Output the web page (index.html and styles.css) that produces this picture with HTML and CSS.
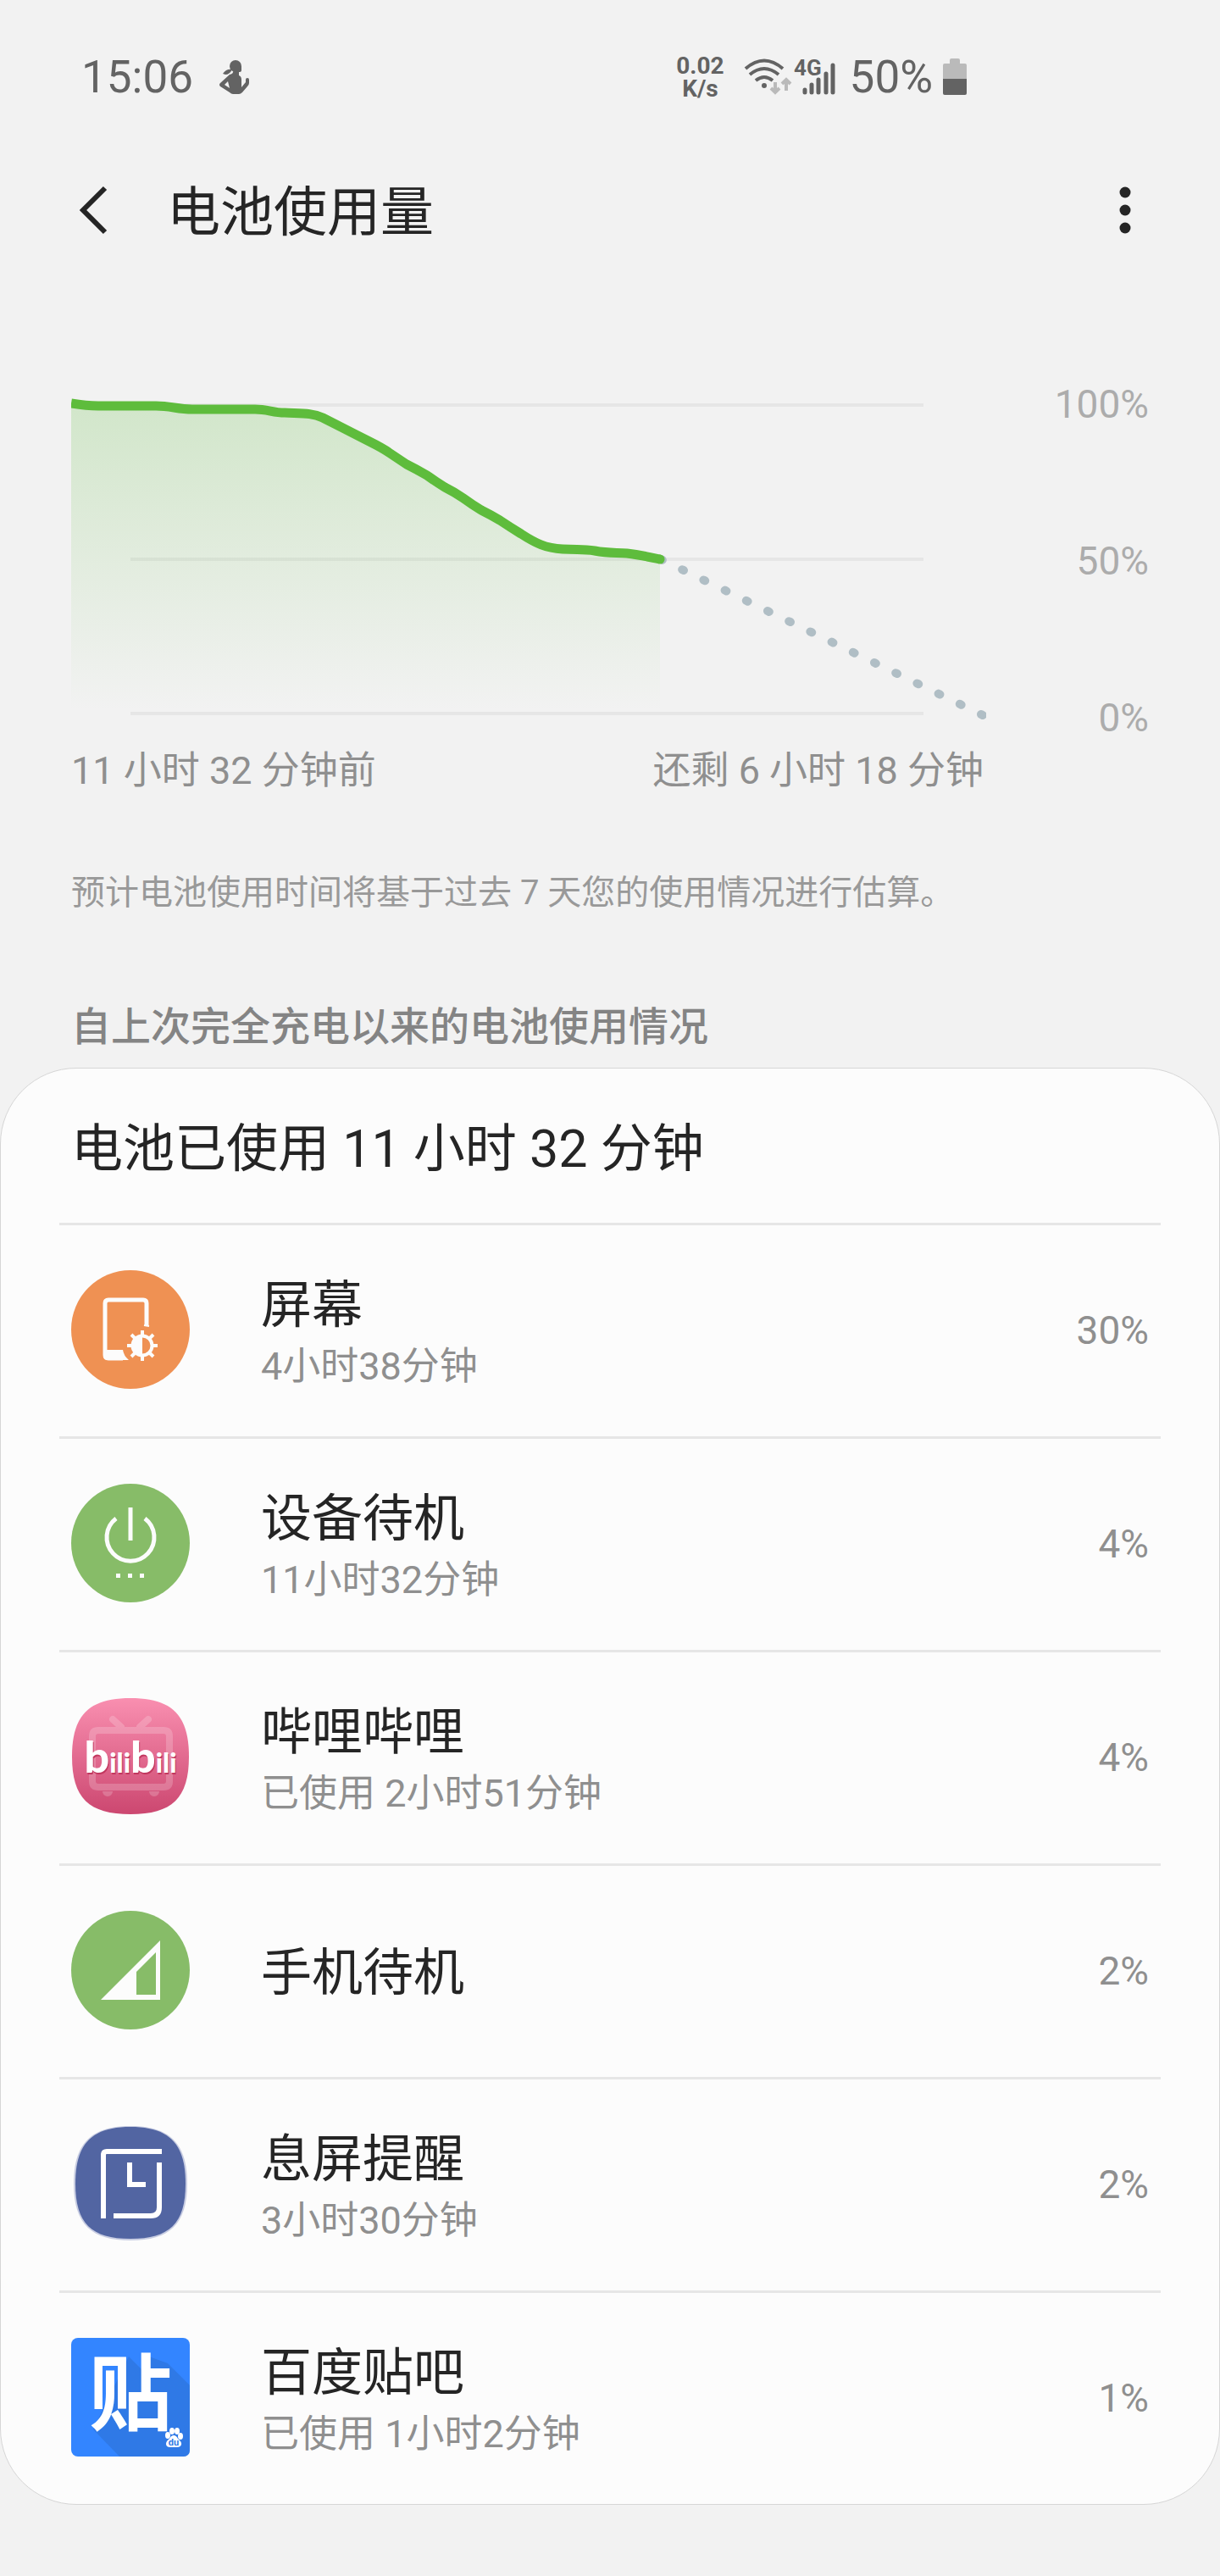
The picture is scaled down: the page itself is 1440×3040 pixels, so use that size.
FILE: index.html
```
<!DOCTYPE html>
<html lang="zh-CN">
<head>
  <meta charset="UTF-8" />
  <meta name="viewport" content="width=device-width, initial-scale=1.0"/>
  <title>电池使用量</title>
  <link rel="stylesheet" href="styles.css">
</head>
<body>
  <div class="status-bar">
    <span class="time">15:06</span>
    <svg class="runner" width="36" height="40" viewBox="0 0 36 40" fill="#636363">
      <circle cx="19" cy="7" r="7"/>
      <path d="M19 7h7v5q0 2-3 2v4q3 1 3 5v9l5-6v-3q0-2 2-2t2 2v4q0 2-2 4l-6 7q-2 2-4 2h-7q-2 0-4-2L1 31q-2-2 0-4l11-10q4-1 4-3z"/>
      <path d="M4 16q4-6 11-5-3 6-8 6z"/>
      <path d="M6 29l4-4 2 8z" fill="#f2f2f2"/>
    </svg>
    <div class="status-right">
      <div class="speed">0.02<br>K/s</div>
      <svg class="wifi" width="56" height="44" viewBox="0 0 56 44">
        <g fill="none" stroke="#636363" stroke-width="4">
          <path d="M2 12q22-19 44 0"/>
          <path d="M7 19q17-14 34 0"/>
          <path d="M14 26q10-8 20 0"/>
        </g>
        <circle cx="24" cy="32" r="3" fill="#636363"/>
        <g fill="none" stroke="#bababa" stroke-width="4">
          <path d="M37 28v12M32 35l5 5 5-5"/>
          <path d="M50 38v-12M45 30l5-5 5 5"/>
        </g>
      </svg>
      <svg class="signal" width="50" height="44" viewBox="0 0 50 44">
        <text x="0" y="20">4G</text>
        <g stroke="#636363" stroke-width="5" stroke-linecap="round">
          <path d="M13 37v3M21 31v9M29 25v15M38 18v22M46 8v32"/>
        </g>
      </svg>
      <span class="level">50%</span>
      <svg width="28" height="44" viewBox="0 0 28 44">
        <path d="M8 2q0-2 2-2h8q2 0 2 2v4h6q2 0 2 2v16H0V8q0-2 2-2h6z" fill="#bababa"/>
        <path d="M0 24h28v17q0 2-2 2H2q-2 0-2-2z" fill="#636363"/>
      </svg>
    </div>
  </div>

  <header class="header">
    <button class="back-btn" aria-label="返回">
      <svg width="36" height="60" viewBox="0 0 36 60"><path d="M36 4L10 30l26 26" fill="none" stroke="#252525" stroke-width="6"/></svg>
    </button>
    <h1>电池使用量</h1>
    <button class="menu-btn" aria-label="更多选项">
      <svg width="14" height="60" viewBox="0 0 14 60" fill="#252525"><circle cx="7" cy="9" r="6.5"/><circle cx="7" cy="30" r="6.5"/><circle cx="7" cy="51" r="6.5"/></svg>
    </button>
  </header>

  <section class="chart">
    <div class="plot">
      <svg viewBox="0 0 1080 424">
        <defs>
          <linearGradient id="area" x1="0" y1="0" x2="0" y2="1">
            <stop offset="0" stop-color="#5ebc3c" stop-opacity="0.22"/>
            <stop offset="1" stop-color="#5ebc3c" stop-opacity="0"/>
          </linearGradient>
        </defs>
        <path d="M70 28h936M70 210h936M70 392h936" stroke="#e6e6e6" stroke-width="4"/>
        <path d="M0 26L30 29H100L141 33H217L252 37Q280 37 297 43L368 81L396 99L417 110L440 126L460 137L481 152L504 164L531 181Q555 196 573 197L605 198L653 203L695 210V388H0z" fill="url(#area)"/>
        <path d="M696 210L1076 394" fill="none" stroke="#b0bec5" stroke-width="10" stroke-linecap="round" stroke-dasharray="2 26"/>
        <path d="M0 26C12 28 20 29 32 29H100C118 29 125 33 143 33H217C232 33 238 37 252 37C272 38 284 37 297 43L352 71Q368 79 375 84Q387 92 396 98Q408 104 420 111Q431 119 441 125Q453 131 463 138Q474 146 484 152Q496 158 506 164Q518 172 531 180C548 191 560 197 580 198C600 199 604 198 618 200C634 203 642 202 656 203Q672 205 695 210" fill="none" stroke="#5ebc3c" stroke-width="11"/>
        <circle cx="695" cy="210" r="5.5" fill="#5ebc3c"/>
      </svg>
      <div class="x-labels">
        <span>11 小时 32 分钟前</span>
        <span>还剩 6 小时 18 分钟</span>
      </div>
    </div>
    <div class="y-labels">
      <span>100%</span>
      <span>50%</span>
      <span>0%</span>
    </div>
  </section>

  <p class="note">预计电池使用时间将基于过去 7 天您的使用情况进行估算。</p>
  <h2>自上次完全充电以来的电池使用情况</h2>

  <main class="card">
    <h3>电池已使用 11 小时 32 分钟</h3>
    <ul>
      <li><a class="row" href="#screen">
        <svg class="icon" viewBox="0 0 140 140">
          <circle cx="70" cy="70" r="70" fill="#ef9153"/>
          <path d="M89 66V39q0-4-4-4H44q-4 0-4 4v61q0 4 4 4h17" fill="none" stroke="#fcfcfc" stroke-width="5"/>
          <path d="M40 94h21q1 7 7 12H43q-4 0-4-4z" fill="#fcfcfc"/>
          <path d="M86 65l6 1" stroke="#fcfcfc" stroke-width="2"/>
          <circle cx="84" cy="89" r="11.5" fill="none" stroke="#fcfcfc" stroke-width="4"/>
          <path d="M84 77a12 12 0 0 0 0 24z" fill="#fcfcfc"/>
          <path d="M84 71v7M84 100v7M66 89h7M95 89h7M71 76l5 5M92 97l5 5M97 76l-5 5M76 97l-5 5" stroke="#fcfcfc" stroke-width="4"/>
        </svg>
        <div class="info"><b>屏幕</b><span>4小时38分钟</span></div>
        <span class="percent">30%</span>
      </a></li>
      <li><a class="row" href="#standby">
        <svg class="icon" viewBox="0 0 140 140">
          <circle cx="70" cy="70" r="70" fill="#87bc68"/>
          <path d="M53 41a28 28 0 1 0 34 0M70 28v39" fill="none" stroke="#fcfcfc" stroke-width="5"/>
          <path d="M53 106h5v5h-5zM67 106h5v5h-5zM81 106h5v5h-5z" fill="#fcfcfc"/>
        </svg>
        <div class="info"><b>设备待机</b><span>11小时32分钟</span></div>
        <span class="percent">4%</span>
      </a></li>
      <li><a class="row" href="#bilibili">
        <svg class="icon" viewBox="0 0 140 140">
          <defs>
            <linearGradient id="pink" x1="0" y1="0" x2="0" y2="1">
              <stop offset="0" stop-color="#f98fb0"/>
              <stop offset="1" stop-color="#cc4770"/>
            </linearGradient>
          </defs>
          <path d="M70 1C119 1 139 21 139 70S119 138 70 138 1 119 1 70 21 1 70 1z" fill="url(#pink)"/>
          <g opacity="0.2" stroke="#fff" fill="none" stroke-width="8" stroke-linecap="round">
            <path d="M32 39h77q7 0 7 7v53q0 7-7 7H32q-7 0-7-7V46q0-7 7-7zM49 26l10 9M91 26l-10 9"/>
            <path d="M37 111a6 6 0 0 0 12 0zM92 111a6 6 0 0 0 12 0z" fill="#fff" stroke="none"/>
          </g>
          <text class="bili shade" x="71" y="91">b<tspan>ili</tspan>b<tspan>ili</tspan></text>
          <text class="bili" x="70" y="89">b<tspan>ili</tspan>b<tspan>ili</tspan></text>
        </svg>
        <div class="info"><b>哔哩哔哩</b><span>已使用 2小时51分钟</span></div>
        <span class="percent">4%</span>
      </a></li>
      <li><a class="row" href="#phone">
        <svg class="icon" viewBox="0 0 140 140">
          <circle cx="70" cy="70" r="70" fill="#87bc68"/>
          <path d="M35 105L105 35V105zM77 99h23V49L77 72z" fill="#fcfcfc" fill-rule="evenodd"/>
        </svg>
        <div class="info"><b>手机待机</b></div>
        <span class="percent">2%</span>
      </a></li>
      <li><a class="row" href="#aod">
        <svg class="icon" viewBox="0 0 140 140">
          <path d="M70 2C116 2 137 22 137 70S116 137 70 137 3 118 3 70 24 2 70 2z" fill="#c8cde2"/>
          <path d="M70 3C116 3 135 23 135 70S116 135 70 135 5 117 5 70 24 3 70 3z" fill="#5265a2"/>
          <g fill="none" stroke="#fff" stroke-width="6">
            <path d="M38 111V36q0-4 4-4h65"/>
            <path d="M104 45v53q0 10-10 10H50"/>
            <path d="M69 45v26h19"/>
          </g>
        </svg>
        <div class="info"><b>息屏提醒</b><span>3小时30分钟</span></div>
        <span class="percent">2%</span>
      </a></li>
      <li><a class="row" href="#tieba">
        <svg class="icon" viewBox="0 0 140 140">
          <rect width="140" height="140" rx="8" fill="#3385ff"/>
          <path d="M68 22L92 46V22L114 30L140 56V132q0 8-8 8H57L26 108z" fill="#2f79e6"/>
          <text class="tie" x="70" y="101">贴</text>
          <g fill="#fff">
            <ellipse cx="114" cy="115" rx="3" ry="4"/>
            <ellipse cx="119" cy="110" rx="3" ry="4"/>
            <ellipse cx="125" cy="110" rx="3" ry="4"/>
            <ellipse cx="129" cy="116" rx="3" ry="4"/>
            <path d="M121 115q3 0 5 4 5 4 4 7-1 3-5 3h-8q-5 0-5-4 0-3 4-6 2-4 5-4z"/>
          </g>
          <text class="du" x="121" y="127">du</text>
        </svg>
        <div class="info"><b>百度贴吧</b><span>已使用 1小时2分钟</span></div>
        <span class="percent">1%</span>
      </a></li>
    </ul>
  </main>
</body>
</html>
```
FILE: styles.css
```
* { box-sizing: border-box; }
body {
  margin: 0;
  padding-bottom: 84px;
  font-family: Roboto, "Noto Sans CJK SC", sans-serif;
  background: #f2f2f2;
  color: #252525;
}
h1, h2, h3, p, ul {
  margin: 0;
  padding: 0;
}
ul {
  list-style: none;
}
svg {
  display: block;
  flex-shrink: 0;
  overflow: visible;
}
button {
  border: none;
  padding: 0;
  background: none;
  cursor: pointer;
}
.status-bar {
  display: flex;
  align-items: center;
  height: 122px;
  padding: 60px 299px 0 96px;
  font-size: 53px;
  line-height: 60px;
  color: #636363;
}
.runner {
  margin-left: 31px;
}
.status-right {
  display: flex;
  align-items: center;
  margin-left: auto;
}
.speed {
  font-size: 28px;
  font-weight: 700;
  line-height: 27px;
  text-align: center;
}
.wifi {
  margin-left: 23px;
}
.signal {
  margin-left: 3px;
}
.signal text {
  font-size: 26px;
  font-weight: 700;
  fill: #636363;
}
.level {
  margin: 0 12px 0 16px;
}
.header {
  display: flex;
  align-items: center;
  height: 174px;
  padding: 78px 105px 0 88px;
}
h1 {
  flex: 1;
  margin-left: 73px;
  padding-top: 6px;
  font-size: 63px;
  font-weight: 400;
  line-height: 90px;
}
.chart {
  display: flex;
  gap: 80px;
  padding: 154px 84px 0;
}
.plot {
  flex: 1;
}
.plot svg {
  width: 100%;
  overflow: hidden;
}
.x-labels {
  display: flex;
  justify-content: space-between;
  margin-top: 6px;
  padding-right: 3px;
  font-size: 45px;
  line-height: 60px;
  color: #8f8f8f;
}
.y-labels {
  display: flex;
  flex-direction: column;
  justify-content: space-between;
  width: 112px;
  margin-bottom: 66px;
  font-size: 46px;
  line-height: 54px;
  text-align: right;
  color: #acacac;
}
.note {
  padding: 84px 84px 0;
  font-size: 40px;
  line-height: 60px;
  color: #999;
}
h2 {
  padding: 98px 84px 18px;
  font-size: 47px;
  font-weight: 500;
  line-height: 60px;
  color: #848484;
}
.card {
  padding: 0 69px;
  border: 1px solid #d6d6d6;
  border-radius: 90px;
  background: #fcfcfc;
}
h3 {
  padding: 50px 14px 42px;
  font-size: 61px;
  font-weight: 400;
  line-height: 90px;
}
.row {
  display: flex;
  align-items: center;
  height: 252px;
  padding: 0 14px 3px;
  border-top: 3px solid #e6e6e6;
  color: inherit;
  text-decoration: none;
}
.icon {
  width: 140px;
  height: 140px;
}
.info {
  flex: 1;
  margin-left: 84px;
  padding-top: 8px;
}
.info b {
  display: block;
  font-size: 60px;
  font-weight: 400;
  line-height: 80px;
}
.info span {
  display: block;
  font-size: 45px;
  line-height: 64px;
  color: #8f8f8f;
}
.percent {
  padding-top: 2px;
  font-size: 46px;
  color: #8f8f8f;
}
.bili {
  font-family: Lato, sans-serif;
  font-size: 52px;
  font-weight: 900;
  text-anchor: middle;
  fill: #fff;
}
.bili tspan {
  font-size: 32px;
}
.shade {
  fill: #c2385f;
}
.tie {
  font-family: "Noto Sans CJK SC", sans-serif;
  font-size: 98px;
  font-weight: 700;
  text-anchor: middle;
  fill: #fff;
}
.du {
  font-size: 11px;
  font-weight: 700;
  text-anchor: middle;
  fill: #2f79e6;
}
```
